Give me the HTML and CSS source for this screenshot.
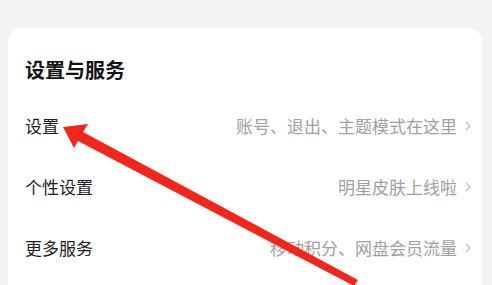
FILE: index.html
```html
<!DOCTYPE html>
<html lang="zh">
<head>
<meta charset="utf-8">
<link rel="stylesheet" href="styles.css">
</head>
<body>
<div class="card">
  <div class="title">设置与服务</div>
  <div class="row">
    <span class="label">设置</span>
    <span class="hint">账号、退出、主题模式在这里</span>
    <svg class="chev" viewBox="0 0 6 10" width="6" height="10"><path d="M1 1 L5 5 L1 9" fill="none" stroke="#bdbdbd" stroke-width="1.2"/></svg>
  </div>
  <div class="row">
    <span class="label">个性设置</span>
    <span class="hint">明星皮肤上线啦</span>
    <svg class="chev" viewBox="0 0 6 10" width="6" height="10"><path d="M1 1 L5 5 L1 9" fill="none" stroke="#bdbdbd" stroke-width="1.2"/></svg>
  </div>
  <div class="row">
    <span class="label">更多服务</span>
    <span class="hint">移动积分、网盘会员流量</span>
    <svg class="chev" viewBox="0 0 6 10" width="6" height="10"><path d="M1 1 L5 5 L1 9" fill="none" stroke="#bdbdbd" stroke-width="1.2"/></svg>
  </div>
</div>
<svg class="arrow" viewBox="0 0 492 285" width="492" height="285">
  <polygon points="63,127 88,124 83,132 358,280 354,286 78,141 74,148" fill="#f3261b"/>
</svg>
</body>
</html>
```
FILE: styles.css
```css
html, body {
  margin: 0;
  padding: 0;
}
body {
  background: #f2f3f5;
  font-family: "Noto Sans CJK SC", "Noto Sans", sans-serif;
  width: 492px;
  height: 285px;
  overflow: hidden;
  position: relative;
}
.card {
  margin: 28px 10px 0 8px;
  background: #ffffff;
  border-radius: 14px 14px 0 0;
  padding: 28px 11px 0 17px;
  height: 257px;
  box-sizing: border-box;
  overflow: hidden;
}
.title {
  font-size: 20px;
  font-weight: 700;
  line-height: 28px;
  color: #141414;
  margin-bottom: 11px;
}
.row {
  height: 61px;
  display: flex;
  align-items: center;
}
.label {
  font-size: 17px;
  color: #1e1e1e;
  flex: 1;
}
.hint {
  font-size: 17px;
  color: #a0a0a0;
}
.chev {
  margin-left: 8px;
  margin-top: 1px;
}
.arrow {
  position: absolute;
  left: 0;
  top: 0;
  pointer-events: none;
}
```
